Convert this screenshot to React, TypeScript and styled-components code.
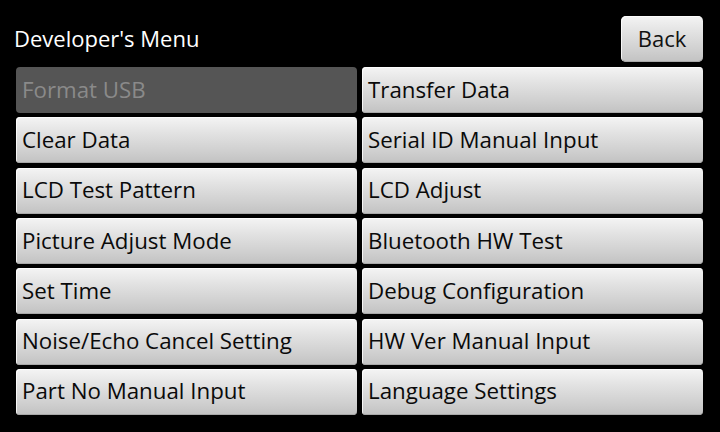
import React from "react";
import styled, { createGlobalStyle, css } from "styled-components";

const Global = createGlobalStyle`
  html, body { margin: 0; padding: 0; background: #000; }
  body { width: 720px; height: 432px; overflow: hidden; font-family: "Open Sans", "DejaVu Sans", sans-serif; }
`;

const Screen = styled.div`
  width: 720px;
  height: 432px;
  box-sizing: border-box;
  padding: 16px 17px 0 16px;
  background: #000;
  display: flex;
  flex-direction: column;
`;

const Header = styled.div`
  height: 46px;
  display: flex;
  align-items: center;
  justify-content: space-between;
`;

const Title = styled.div`
  color: #fff;
  font-size: 22px;
  margin-left: -2px;
  margin-bottom: 2px;
`;

const buttonFace = css`
  background: linear-gradient(to bottom, #f4f4f4 0%, #e2e2e2 35%, #cfcfcf 75%, #c2c2c2 100%);
  box-shadow: inset 1px 1px 0 rgba(255,255,255,0.8), inset 0 -1px 0 #a8a8a8;
  color: #000;
`;

const BackButton = styled.div`
  ${buttonFace};
  width: 82px;
  height: 46px;
  border-radius: 5px;
  display: flex;
  align-items: center;
  justify-content: center;
  font-size: 22px;
  color: #111;
  padding-bottom: 2px;
  box-sizing: border-box;
`;

const Grid = styled.div`
  margin-top: 5px;
  display: grid;
  grid-template-columns: 1fr 1fr;
  grid-template-rows: repeat(7, 1fr);
  column-gap: 5px;
  row-gap: 4.3px;
  height: 348px;
`;

const MenuButton = styled.div<{ $disabled?: boolean }>`
  ${buttonFace};
  border-radius: 4px;
  display: flex;
  align-items: center;
  padding-left: 6px;
  padding-bottom: 2px;
  font-size: 22.3px;
  color: #0a0a0a;
  ${(p) =>
    p.$disabled &&
    css`
      background: #555;
      box-shadow: none;
      color: #8a8a8a;
    `}
`;

const items: { label: string; disabled?: boolean }[] = [
  { label: "Format USB", disabled: true },
  { label: "Transfer Data" },
  { label: "Clear Data" },
  { label: "Serial ID Manual Input" },
  { label: "LCD Test Pattern" },
  { label: "LCD Adjust" },
  { label: "Picture Adjust Mode" },
  { label: "Bluetooth HW Test" },
  { label: "Set Time" },
  { label: "Debug Configuration" },
  { label: "Noise/Echo Cancel Setting" },
  { label: "HW Ver Manual Input" },
  { label: "Part No Manual Input" },
  { label: "Language Settings" },
];

export default function App() {
  return (
    <>
      <Global />
      <Screen>
        <Header>
          <Title>Developer's Menu</Title>
          <BackButton>Back</BackButton>
        </Header>
        <Grid>
          {items.map((it) => (
            <MenuButton key={it.label} $disabled={it.disabled}>
              {it.label}
            </MenuButton>
          ))}
        </Grid>
      </Screen>
    </>
  );
}
